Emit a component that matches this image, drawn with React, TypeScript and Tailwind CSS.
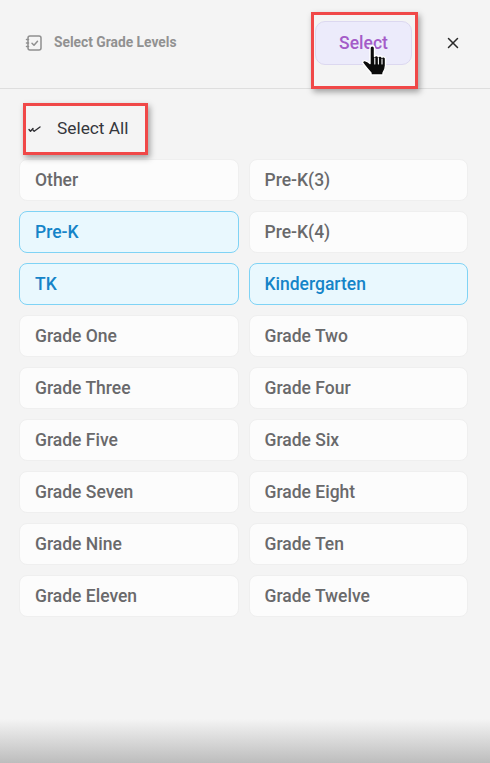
import React from 'react';
import { X } from 'lucide-react';

const grades = [
  ['Other', false],
  ['Pre-K(3)', false],
  ['Pre-K', true],
  ['Pre-K(4)', false],
  ['TK', true],
  ['Kindergarten', true],
  ['Grade One', false],
  ['Grade Two', false],
  ['Grade Three', false],
  ['Grade Four', false],
  ['Grade Five', false],
  ['Grade Six', false],
  ['Grade Seven', false],
  ['Grade Eight', false],
  ['Grade Nine', false],
  ['Grade Ten', false],
  ['Grade Eleven', false],
  ['Grade Twelve', false],
] as const;

function NotebookCheck() {
  return (
    <svg width="18" height="18" viewBox="0 0 18 18" fill="none" stroke="#8f8f8f" strokeWidth="1.5" strokeLinecap="round" strokeLinejoin="round">
      <rect x="3" y="2" width="13" height="14" rx="2" />
      <path d="M1.500 5.500h2M1.500 9h2M1.500 12.500h2" />
      <path d="M7 9.200l2 2 3.500-4" />
    </svg>
  );
}

function DoubleCheck() {
  return (
    <svg width="13" height="8" viewBox="0 0 13 8" fill="none" stroke="#2f2f33" strokeWidth="1.400" strokeLinecap="round" strokeLinejoin="round">
      <path d="M1 4.500l1.500 1.800L5 3.500" />
      <path d="M5 5l1.200 1.300L12 2" />
    </svg>
  );
}

function HandCursor() {
  return (
    <svg width="26" height="32" viewBox="0 0 26 32" className="absolute left-[362px] top-[45px]">
      <path
        d="M8 3c0-1.400 1-2.300 2.200-2.300S12.500 1.600 12.500 3v8.500c.4-1.300 3.400-1.300 3.800.2.600-1.100 3.300-1 3.700.5.800-.8 3.300-.5 3.500 1.300v7c0 3.500-1 5-2.500 7.500v2H9v-2C6 25 3 21 1 18.500c-1-1.800.3-3.300 2-2.800 1 .3 3.500 1.500 5 2.800V3z"
        fill="#0b0b0b"
        stroke="#ffffff"
        strokeWidth="1.400"
        strokeLinejoin="round"
      />
      <path d="M12.800 13v6M16.400 13v6M20 14v5" stroke="#ffffff" strokeWidth="1.100" strokeLinecap="round" />
    </svg>
  );
}

export default function App() {
  return (
    <div
      className="relative h-[763px] w-[490px] overflow-hidden bg-[#f4f4f4]"
      style={{ fontFamily: 'Roboto, sans-serif' }}
    >
      <header className="flex h-[89px] items-center border-b border-[#dedede] pb-[2px] pl-[25px] pr-[28px]">
        <NotebookCheck />
        <span className="ml-[11px] -translate-y-px text-[13.800px] font-bold text-[#919191]">Select Grade Levels</span>
        <button className="ml-auto mr-[32px] h-[44px] w-[97px] rounded-[10px] border border-[#dcd8f0] bg-[#ecebfb] text-[17.500px] font-medium text-[#a45cc8]">
          Select
        </button>
        <X size={18} strokeWidth={2} className="text-[#2b2b2b]" />
      </header>

      <div className="flex h-[70px] items-center pl-[28px] pt-[10px]">
        <DoubleCheck />
        <span className="ml-[16px] text-[17.300px] text-[#35373c]">Select All</span>
      </div>

      <div className="ml-[19px] grid w-[449px] grid-cols-2 gap-x-[10px] gap-y-[10px]">
        {grades.map(([label, active]) =>
          active ? (
            <div
              key={label}
              className="flex h-[42px] items-center rounded-lg border border-[#7fd3f5] bg-[#e9f8fe] pl-[15px] text-[17.500px] font-medium text-[#1584c8]"
            >
              {label}
            </div>
          ) : (
            <div
              key={label}
              className="flex h-[42px] items-center rounded-lg border border-[#efefef] bg-[#fcfcfc] pl-[15px] text-[17.500px] font-medium text-[#69696b]"
            >
              {label}
            </div>
          ),
        )}
      </div>

      {/* annotation overlays from the recording */}
      <div className="absolute left-[311px] top-[12px] h-[77px] w-[107px] border-[3px] border-[#f04848] shadow-[2px_3px_6px_rgba(0,0,0,0.35)]" />
      <div className="absolute left-[23px] top-[103px] h-[52px] w-[125px] border-[3px] border-[#f04848] shadow-[2px_3px_6px_rgba(0,0,0,0.35)]" />
      <HandCursor />

      <div className="absolute inset-x-0 bottom-0 h-[44px] bg-gradient-to-b from-[#f4f4f4] to-[#bdbdbd]" />
    </div>
  );
}
